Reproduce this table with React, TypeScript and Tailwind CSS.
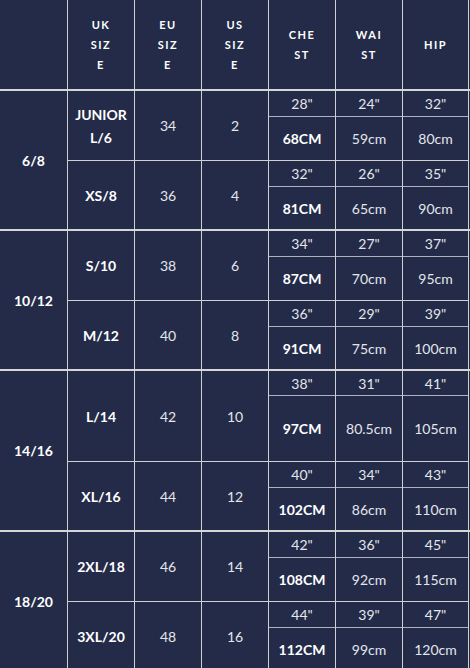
import React from "react"

type Row = {
  uk: string[]
  eu: string
  us: string
  chest: [string, string]
  waist: [string, string]
  hip: [string, string]
  tall?: boolean
}

type Group = { label: string; rows: Row[] }

const groups: Group[] = [
  {
    label: "6/8",
    rows: [
      { uk: ["JUNIOR", "L/6"], eu: "34", us: "2", chest: ['28"', "68CM"], waist: ['24"', "59cm"], hip: ['32"', "80cm"] },
      { uk: ["XS/8"], eu: "36", us: "4", chest: ['32"', "81CM"], waist: ['26"', "65cm"], hip: ['35"', "90cm"] },
    ],
  },
  {
    label: "10/12",
    rows: [
      { uk: ["S/10"], eu: "38", us: "6", chest: ['34"', "87CM"], waist: ['27"', "70cm"], hip: ['37"', "95cm"] },
      { uk: ["M/12"], eu: "40", us: "8", chest: ['36"', "91CM"], waist: ['29"', "75cm"], hip: ['39"', "100cm"] },
    ],
  },
  {
    label: "14/16",
    rows: [
      { uk: ["L/14"], eu: "42", us: "10", chest: ['38"', "97CM"], waist: ['31"', "80.5cm"], hip: ['41"', "105cm"], tall: true },
      { uk: ["XL/16"], eu: "44", us: "12", chest: ['40"', "102CM"], waist: ['34"', "86cm"], hip: ['43"', "110cm"] },
    ],
  },
  {
    label: "18/20",
    rows: [
      { uk: ["2XL/18"], eu: "46", us: "14", chest: ['42"', "108CM"], waist: ['36"', "92cm"], hip: ['45"', "115cm"] },
      { uk: ["3XL/20"], eu: "48", us: "16", chest: ['44"', "112CM"], waist: ['39"', "99cm"], hip: ['47"', "120cm"] },
    ],
  },
]

const headers = [["UK", "SIZ", "E"], ["EU", "SIZ", "E"], ["US", "SIZ", "E"], ["CHE", "ST"], ["WAI", "ST"], ["HIP"]]

// inch / cm heights (cm height includes its 1px top line)
function heights(tall: boolean | undefined, first: boolean) {
  if (tall) return ["h-[24px]", "h-[66px]"]
  return first ? ["h-[25px]", "h-[44px]"] : ["h-[25px]", "h-[43px]"]
}

function Measure({
  value,
  bold,
  h,
  last,
}: {
  value: [string, string]
  bold?: boolean
  h: string[]
  last?: boolean
}) {
  return (
    <div className={`flex w-[67px] flex-col border-l border-[#d0d0d0] ${last ? "border-r" : ""}`}>
      <div className={`flex items-center justify-center text-[14px] text-[#e4e6ec] ${h[0]}`}>{value[0]}</div>
      <div
        className={`flex items-center justify-center border-t border-[#aeb3c2] text-[14px] ${h[1]} ${
          bold ? "font-bold text-white" : "text-[#e4e6ec]"
        }`}
      >
        {value[1]}
      </div>
    </div>
  )
}

export default function App() {
  return (
    <div className="min-h-screen w-[470px] bg-[#232b48] font-['Lato','Open_Sans',sans-serif]">
      <div className="flex h-[89px]">
        <div className="w-[67px]" />
        {headers.map((h, i) => (
          <div
            key={i}
            className={`flex w-[67px] flex-col items-center justify-center border-l border-[#d0d0d0] text-[11px] font-bold leading-[20px] tracking-[1.5px] text-white ${
              i === headers.length - 1 ? "border-r" : ""
            }`}
          >
            {h.map((l) => (
              <span key={l}>{l}</span>
            ))}
          </div>
        ))}
      </div>

      {groups.map((g) => (
        <div key={g.label} className="flex border-t-2 border-[#d6d6d6]">
          <div className="flex w-[67px] items-center justify-center text-[14px] font-bold text-white">{g.label}</div>
          <div className="flex flex-col">
            {g.rows.map((r, i) => {
              const h = heights(r.tall, i === 0)
              return (
                <div key={i} className={`flex ${i > 0 ? "border-t border-[#d0d0d0]" : ""}`}>
                  <div className="flex w-[67px] flex-col items-center justify-center border-l border-[#d0d0d0] text-[14px] font-bold leading-[23px] text-white">
                    {r.uk.map((l) => (
                      <span key={l}>{l}</span>
                    ))}
                  </div>
                  <div className="flex w-[67px] items-center justify-center border-l border-[#d0d0d0] text-[14px] text-[#e4e6ec]">
                    {r.eu}
                  </div>
                  <div className="flex w-[67px] items-center justify-center border-l border-[#d0d0d0] text-[14px] text-[#e4e6ec]">
                    {r.us}
                  </div>
                  <Measure value={r.chest} bold h={h} />
                  <Measure value={r.waist} h={h} />
                  <Measure value={r.hip} h={h} last />
                </div>
              )
            })}
          </div>
        </div>
      ))}
    </div>
  )
}
